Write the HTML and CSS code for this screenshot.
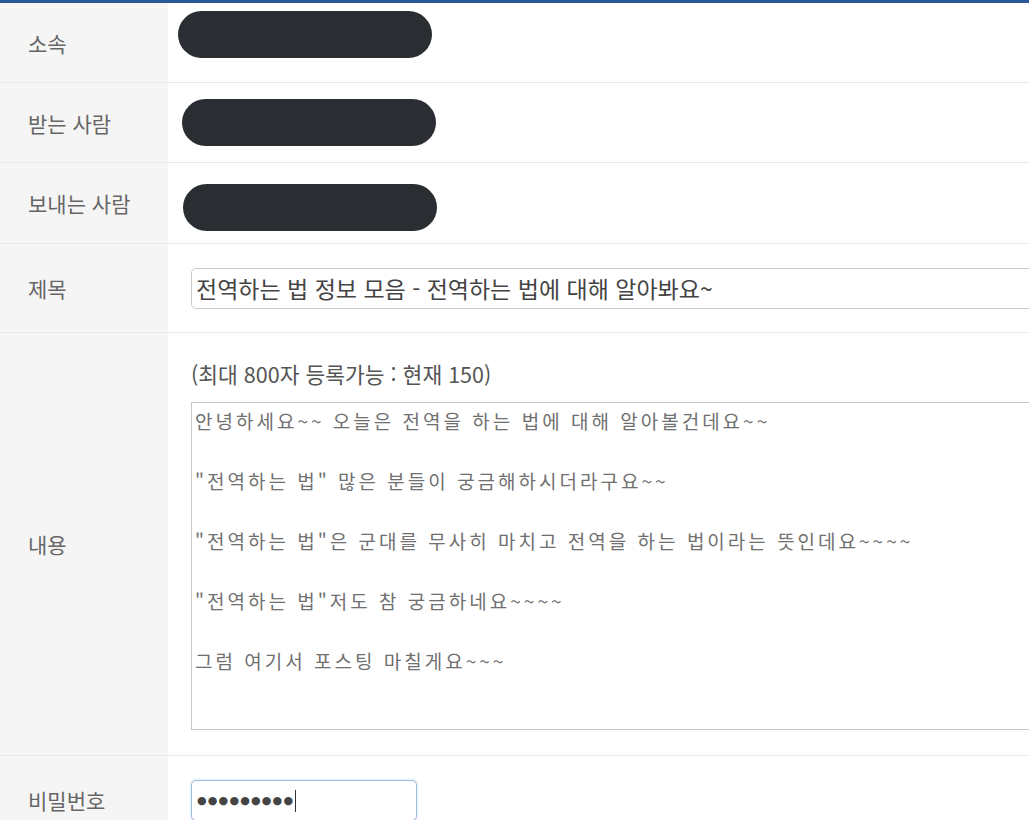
FILE: index.html
```html
<!DOCTYPE html>
<html lang="ko">
<head>
  <meta charset="UTF-8" />
  <meta name="viewport" content="width=device-width, initial-scale=1" />
  <title>편지 쓰기</title>
  <link rel="stylesheet" href="styles.css">
</head>
<body>
  <table class="write-form">
    <tr class="row-short row-first">
      <th>소속</th>
      <td><span class="redact redact-1"></span></td>
    </tr>
    <tr class="row-short">
      <th>받는 사람</th>
      <td><span class="redact redact-2"></span></td>
    </tr>
    <tr class="row-short row-third">
      <th>보내는 사람</th>
      <td><span class="redact redact-3"></span></td>
    </tr>
    <tr class="row-title">
      <th>제목</th>
      <td><input type="text" class="title-input" value="전역하는 법 정보 모음 - 전역하는 법에 대해 알아봐요~" /></td>
    </tr>
    <tr class="row-body">
      <th>내용</th>
      <td>
        <p class="counter">(최대 800자 등록가능 : 현재 150)</p>
        <textarea class="body-input">안녕하세요~~ 오늘은 전역을 하는 법에 대해 알아볼건데요~~

"전역하는 법" 많은 분들이 궁금해하시더라구요~~

"전역하는 법"은 군대를 무사히 마치고 전역을 하는 법이라는 뜻인데요~~~~

"전역하는 법"저도 참 궁금하네요~~~~

그럼 여기서 포스팅 마칠게요~~~</textarea>
      </td>
    </tr>
    <tr class="row-pw">
      <th>비밀번호</th>
      <td>
        <div class="pw-wrap">
          <div class="pw-box"><span class="pw-dots">●●●●●●●●●</span><span class="caret"></span></div>
        </div>
      </td>
    </tr>
  </table>
</body>
</html>
```

FILE: styles.css
```css
* {
  box-sizing: border-box;
}

body {
  margin: 0;
  background: #fff;
  font-family: 'Noto Sans CJK KR', 'Noto Sans', sans-serif;
  color: #555;
  overflow: hidden;
}

.write-form {
  width: 1300px;
  border-collapse: collapse;
  border-top: 3px solid #2a5896;
}

.write-form tr {
  border-bottom: 1px solid #e8e8e8;
}

.write-form th {
  width: 168px;
  background: #f5f5f5;
  color: #666;
  font-size: 21px;
  font-weight: 400;
  text-align: left;
  padding: 0 0 0 28px;
  vertical-align: middle;
}

.write-form td {
  padding: 0 0 0 23px;
  vertical-align: middle;
}

.row-short th { height: 80px; }
.row-first th, .row-third th { height: 81px; }
.row-title th { height: 89px; }
.row-body th { height: 423px; }
.row-pw th { height: 88px; }
.row-pw td { vertical-align: top; padding-top: 24px; }

/* redacted values */
.redact {
  display: block;
  width: 254px;
  height: 47px;
  border-radius: 24px;
  background: #2a2d31;
}

.redact-1 { margin: -16px 0 0 -13px; }
.redact-2 { margin: 0 0 0 -9px; }
.redact-3 { margin: 8px 0 0 -8px; }

.title-input {
  display: block;
  width: 1000px;
  height: 41px;
  border: 1px solid #c9c9c9;
  border-radius: 5px;
  padding: 0 4px;
  font-family: 'Noto Sans CJK KR', sans-serif;
  font-size: 23px;
  color: #444;
  background: #fff;
}

.counter {
  margin: 0 0 13px;
  font-size: 21.5px;
  line-height: 30px;
  color: #555;
}

.body-input {
  display: block;
  width: 1000px;
  height: 328px;
  border: 1px solid #c6c6c6;
  padding: 3px 3px;
  resize: none;
  font-family: 'Noto Sans CJK KR', sans-serif;
  font-size: 19px;
  font-weight: 400;
  line-height: 30px;
  letter-spacing: 3px;
  color: #707070;
}

.pw-wrap {
  width: 297px;
  height: 41px;
  border-bottom: 1px solid #c4c4c4;
}

.pw-box {
  width: 226px;
  height: 41px;
  border: 1px solid #9dbde0;
  border-radius: 5px;
  box-shadow: 0 0 3px rgba(102, 153, 220, 0.35);
  padding: 0 5px;
  display: flex;
  align-items: center;
  background: #fff;
}

.pw-dots {
  font-family: 'DejaVu Sans', sans-serif;
  font-size: 11px;
  letter-spacing: 1.2px;
  color: #444;
  line-height: 1;
}

.caret {
  width: 1px;
  height: 22px;
  background: #333;
  margin-left: 1px;
}
```
